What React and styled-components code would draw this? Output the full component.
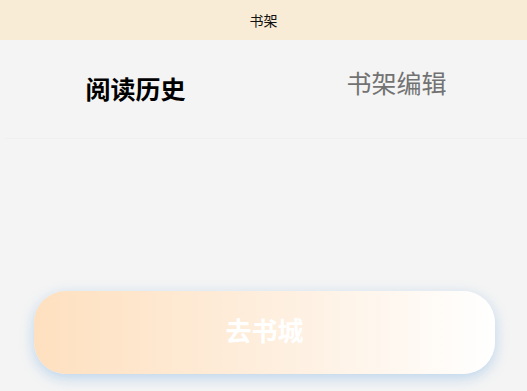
import React, { useState } from 'react';
import styled, { createGlobalStyle } from 'styled-components';

const GlobalStyle = createGlobalStyle`
  html, body {
    margin: 0;
    padding: 0;
    background: #f4f4f4;
    font-family: "Noto Sans CJK SC", "Noto Sans", sans-serif;
  }
`;

const Page = styled.div`
  width: 527px;
  height: 391px;
  display: flex;
  flex-direction: column;
  background: #f4f4f4;
  overflow: hidden;
`;

const TitleBar = styled.header`
  height: 40px;
  background: #f9ecd6;
  display: flex;
  align-items: center;
  justify-content: center;
  font-size: 14px;
  color: #111;
`;

const Tabs = styled.div`
  display: flex;
  height: 98px;
  margin-left: 5px;
  border-bottom: 1px solid #efefef;
`;

const Tab = styled.div`
  flex: 1;
  display: flex;
  justify-content: center;
  align-items: center;
  font-size: 25px;
  font-weight: ${p => (p.active ? 700 : 400)};
  color: ${p => (p.active ? '#000' : '#727272')};
  padding-top: ${p => (p.active ? '0' : '0')};
  padding-bottom: ${p => (p.active ? '2px' : '15px')};
  cursor: pointer;
`;

const Content = styled.main`
  flex: 1;
  display: flex;
  align-items: flex-end;
  padding: 0 32px 17px 34px;
`;

const MallButton = styled.button`
  width: 461px;
  height: 83px;
  padding: 0 0 6px;
  border: none;
  border-radius: 32px;
  background: linear-gradient(90deg, #fee0bf 0%, #feeedd 50%, #ffffff 100%);
  box-shadow: 0 4px 14px rgba(110, 170, 225, 0.42);
  color: #fff;
  font-family: inherit;
  font-size: 26px;
  font-weight: 700;
  cursor: pointer;
`;

export default function App() {
  const [tab, setTab] = useState(0);
  return (
    <>
      <GlobalStyle />
      <Page>
        <TitleBar>书架</TitleBar>
        <Tabs>
          <Tab active={tab === 0} onClick={() => setTab(0)}>阅读历史</Tab>
          <Tab active={tab === 1} onClick={() => setTab(1)}>书架编辑</Tab>
        </Tabs>
        <Content>
          <MallButton>去书城</MallButton>
        </Content>
      </Page>
    </>
  );
}
